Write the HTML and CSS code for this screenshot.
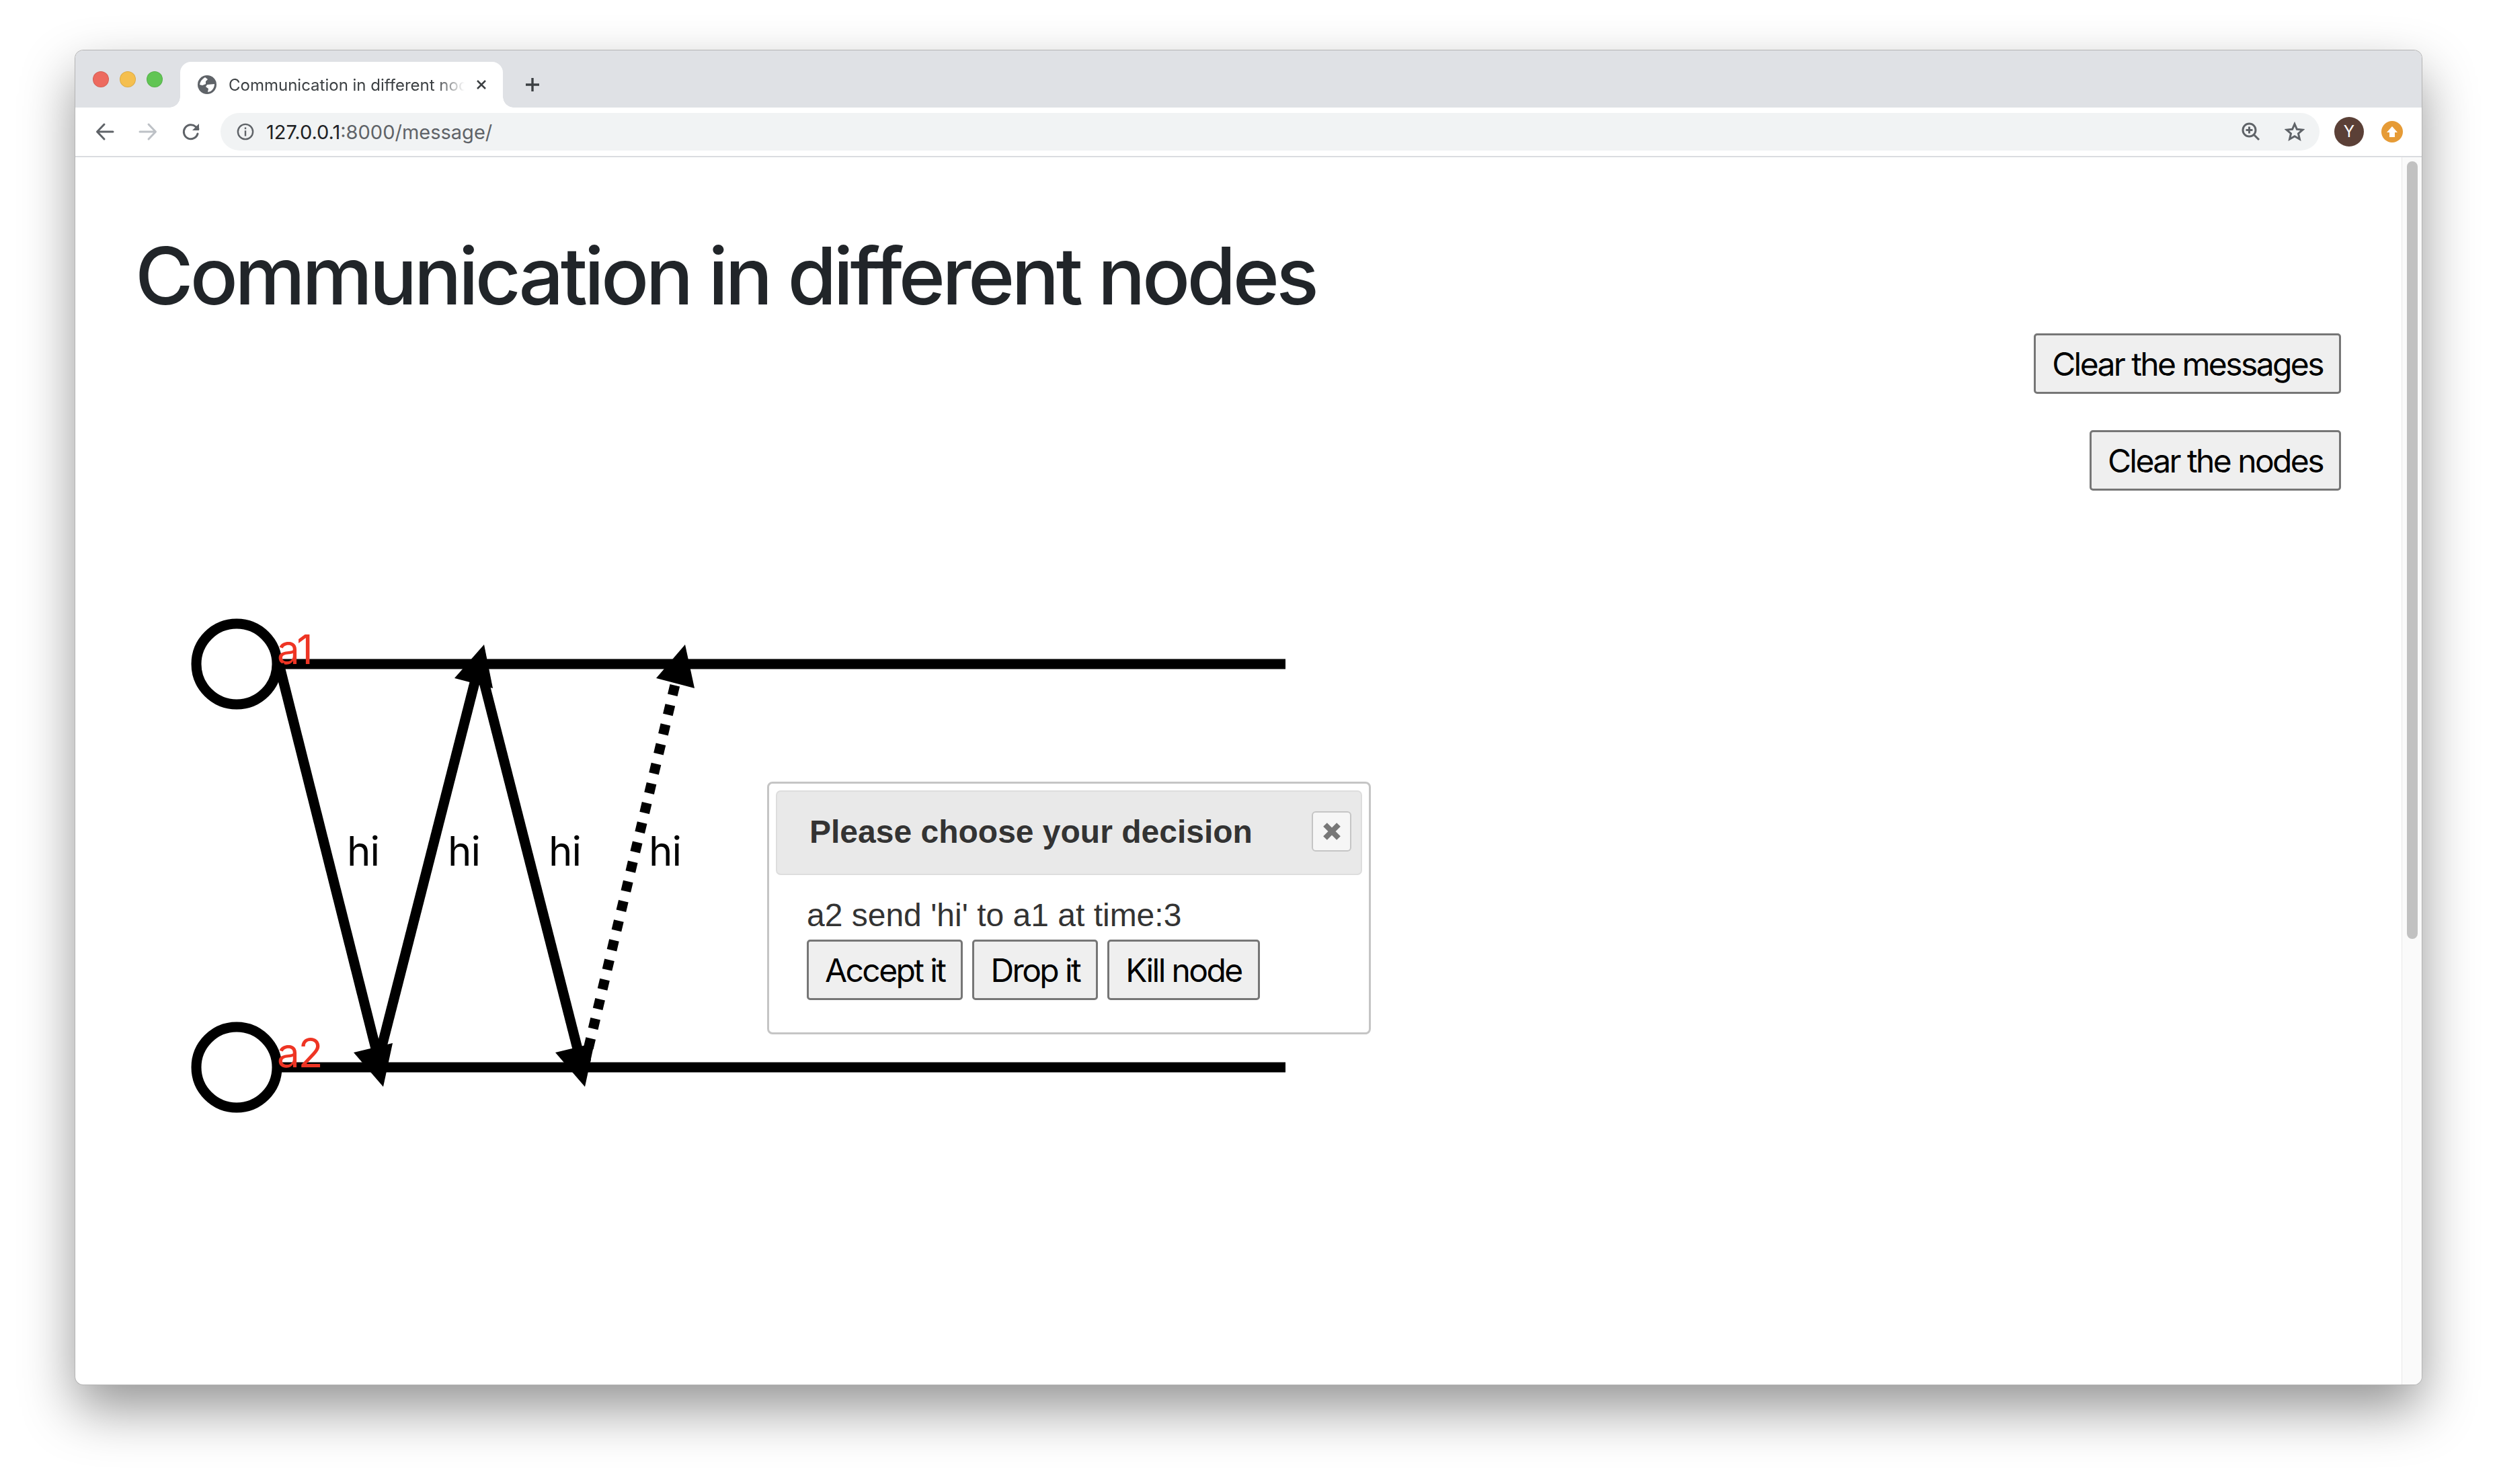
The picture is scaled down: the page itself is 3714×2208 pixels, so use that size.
FILE: index.html
```html
<!DOCTYPE html>
<html lang="en">

<head>
    <meta charset="UTF-8">
    <title>Communication in different nodes</title>
    <link rel="stylesheet" href="styles.css">
</head>

<body>
    <div class="window">
        <div class="tabstrip">
            <div class="lights">
                <span class="light light-red"></span>
                <span class="light light-yellow"></span>
                <span class="light light-green"></span>
            </div>
            <div class="tab">
                <svg class="favicon" viewBox="0 0 28 28">
                    <circle cx="14" cy="14" r="14" fill="#5f6368" />
                    <path d="M3 14 Q4 7 11 3 L15 6 L12 9 L12 13 L7 15 Z" fill="#fff" />
                    <path d="M14 14 L25 13 Q25 20 19 24 L15 25 L16 20 L12 17 Z" fill="#fff" />
                </svg>
                <span class="tab-title">Communication in different nodes</span>
                <svg class="tab-close" viewBox="0 0 16 16">
                    <path d="M2 2 L14 14 M14 2 L2 14" />
                </svg>
            </div>
            <svg class="new-tab" viewBox="0 0 24 24">
                <path d="M12 2 V22 M2 12 H22" />
            </svg>
        </div>

        <div class="toolbar">
            <svg class="nav-icon" viewBox="0 0 28 28">
                <path d="M26 14 H3 M13 3 L2.5 14 L13 25" />
            </svg>
            <svg class="nav-icon nav-disabled" viewBox="0 0 28 28">
                <path d="M2 14 H25 M15 3 L25.5 14 L15 25" />
            </svg>
            <svg class="nav-icon" viewBox="0 0 28 28">
                <path d="M24 17 A10.5 10.5 0 1 1 21 6.5 L25 10" />
                <path class="solid" d="M26 2 V12 H16 Z" />
            </svg>
            <div class="omnibox">
                <svg class="info-icon" viewBox="0 0 28 28">
                    <circle cx="14" cy="14" r="12" />
                    <path d="M14 12 V21 M14 7 V10" />
                </svg>
                <span class="url"><span class="url-host">127.0.0.1</span>:8000/message/</span>
                <svg class="omni-icon zoom-icon" viewBox="0 0 28 28">
                    <circle cx="11.5" cy="11.5" r="9.5" />
                    <path d="M11.5 6.5 V16.5 M6.5 11.5 H16.5 M18.5 18.5 L26 26" />
                </svg>
                <svg class="omni-icon star-icon" viewBox="0 0 30 30">
                    <path d="M15 3.5 L18.4 11.3 L26.9 12.1 L20.5 17.7 L22.4 26 L15 21.7 L7.6 26 L9.5 17.7 L3.1 12.1 L11.6 11.3 Z" />
                </svg>
            </div>
            <div class="avatar">Y</div>
            <svg class="extension" viewBox="0 0 32 32">
                <circle cx="16" cy="16" r="16" fill="#e69b36" />
                <path d="M16 8 L24 17 H20 V24 H12 V17 H8 Z" fill="#fff" />
            </svg>
        </div>

        <div class="viewport">
            <main class="page">
                <h1>Communication in different nodes</h1>

                <div class="actions">
                    <button class="btn">Clear the messages</button>
                    <button class="btn">Clear the nodes</button>
                </div>

                <svg class="diagram" viewBox="0 0 1100 800">
                    <!-- timelines -->
                    <circle class="node" cx="240" cy="108" r="60" />
                    <circle class="node" cx="240" cy="708" r="60" />
                    <line class="timeline" x1="307" y1="108" x2="1800" y2="108" />
                    <line class="timeline" x1="307" y1="708" x2="1800" y2="708" />
                    <text class="node-label" x="300" y="108">a1</text>
                    <text class="node-label" x="300" y="708">a2</text>

                    <!-- messages -->
                    <line class="message" x1="303" y1="108" x2="452" y2="700" />
                    <polygon class="head" points="458,737 414,686 472,672" />
                    <text class="message-label" x="404" y="408">hi</text>

                    <line class="message" x1="448" y1="708" x2="598" y2="120" />
                    <polygon class="head" points="608,79 564,129 621,144" />
                    <text class="message-label" x="554" y="408">hi</text>

                    <line class="message" x1="601" y1="108" x2="752" y2="700" />
                    <polygon class="head" points="758,737 714,686 772,672" />
                    <text class="message-label" x="704" y="408">hi</text>

                    <line class="message message-dropped" x1="891.8" y1="139.7" x2="756" y2="710" />
                    <polygon class="head" points="907,79 864,129 921,144" />
                    <text class="message-label" x="853" y="408">hi</text>
                </svg>

                <div class="dialog">
                    <div class="dialog-title">
                        <span>Please choose your decision</span>
                        <button class="dialog-close" title="Close">
                            <svg viewBox="0 0 28 28">
                                <path d="M4 4 L24 24 M24 4 L4 24" />
                            </svg>
                        </button>
                    </div>
                    <div class="dialog-body">
                        <div>a2 send 'hi' to a1 at time:3</div>
                        <div class="dialog-buttons">
                            <button class="btn">Accept it</button>
                            <button class="btn">Drop it</button>
                            <button class="btn">Kill node</button>
                        </div>
                    </div>
                </div>
            </main>
            <div class="scrollbar">
                <div class="scrollbar-thumb"></div>
            </div>
        </div>
    </div>
</body>

</html>
```

FILE: styles.css
```css
html,
body {
    height: 100%;
}

body {
    margin: 0;
    padding: 75px 112px 148px;
    box-sizing: border-box;
    background-color: #fff;
    font-family: Inter, "Liberation Sans", sans-serif;
    overflow: hidden;
}

.window {
    display: flex;
    flex-direction: column;
    height: 1985px;
    border-radius: 12px;
    overflow: hidden;
    background-color: #fff;
    box-shadow: 0 0 0 1px #b4b4b4, 0 36px 80px rgba(0, 0, 0, 0.42);
}

/* tab strip */
.tabstrip {
    display: flex;
    align-items: flex-end;
    flex: none;
    height: 85px;
    padding-left: 26px;
    background-color: #dfe1e5;
}

.lights {
    display: flex;
    gap: 16px;
    align-self: flex-start;
    margin-top: 31px;
    width: 130px;
}

.light {
    width: 24px;
    height: 24px;
    border-radius: 50%;
    box-sizing: border-box;
    border: 1px solid rgba(0, 0, 0, 0.1);
}

.light-red {
    background-color: #ed6a5f;
}

.light-yellow {
    background-color: #f5bf4f;
}

.light-green {
    background-color: #61c554;
}

.tab {
    position: relative;
    display: flex;
    align-items: center;
    width: 480px;
    height: 68px;
    box-sizing: border-box;
    padding: 0 24px 0 26px;
    border-radius: 16px 16px 0 0;
    background-color: #fff;
}

.tab::before,
.tab::after {
    content: "";
    position: absolute;
    bottom: 0;
    width: 16px;
    height: 16px;
}

.tab::before {
    left: -16px;
    background: radial-gradient(circle at 0 0, #dfe1e5 15.5px, #fff 16px);
}

.tab::after {
    right: -16px;
    background: radial-gradient(circle at 100% 0, #dfe1e5 15.5px, #fff 16px);
}

.favicon {
    flex: none;
    width: 28px;
    height: 28px;
    margin-right: 18px;
}

.tab-title {
    flex: 1;
    overflow: hidden;
    white-space: nowrap;
    font-size: 24px;
    color: #3c4043;
    -webkit-mask-image: linear-gradient(to right, #000 88%, transparent 100%);
    mask-image: linear-gradient(to right, #000 88%, transparent 100%);
}

.tab-close {
    flex: none;
    width: 16px;
    height: 16px;
    margin-left: 17px;
    fill: none;
    stroke: #3c4043;
    stroke-width: 2.5;
}

.new-tab {
    flex: none;
    width: 24px;
    height: 24px;
    margin: 0 0 22px 32px;
    fill: none;
    stroke: #3c4043;
    stroke-width: 3.4;
}

/* toolbar */
.toolbar {
    display: flex;
    align-items: center;
    flex: none;
    height: 72px;
    padding-left: 30px;
    border-bottom: 2px solid #dadce0;
    background-color: #fff;
}

.nav-icon {
    flex: none;
    width: 28px;
    height: 28px;
    margin-right: 36px;
    fill: none;
    stroke: #5f6368;
    stroke-width: 3;
    stroke-linecap: round;
    stroke-linejoin: round;
}

.nav-icon .solid {
    fill: #5f6368;
    stroke: none;
}

.nav-disabled {
    stroke: #bdc1c6;
}

.omnibox {
    display: flex;
    align-items: center;
    flex: none;
    width: 3122px;
    height: 56px;
    margin-left: -6px;
    box-sizing: border-box;
    padding: 0 22px 0 24px;
    border-radius: 28px;
    background-color: #f1f3f4;
}

.info-icon {
    flex: none;
    width: 26px;
    height: 26px;
    margin-right: 18px;
    fill: none;
    stroke: #5f6368;
    stroke-width: 2.6;
}

.url {
    flex: 1;
    font-size: 29px;
    color: #5f6368;
}

.url-host {
    color: #202124;
}

.omni-icon {
    flex: none;
    fill: none;
    stroke: #5f6368;
    stroke-width: 3;
}

.zoom-icon {
    width: 28px;
    height: 28px;
    margin-right: 36px;
}

.star-icon {
    width: 30px;
    height: 30px;
}

.avatar {
    flex: none;
    width: 44px;
    height: 44px;
    margin-left: 22px;
    border-radius: 50%;
    background-color: #5b4037;
    color: #fff;
    font-size: 24px;
    line-height: 44px;
    text-align: center;
}

.extension {
    flex: none;
    width: 32px;
    height: 32px;
    margin-left: 26px;
}

/* page */
.viewport {
    display: flex;
    flex: 1;
    min-height: 0;
}

.page {
    position: relative;
    flex: 1;
    min-width: 0;
    overflow: hidden;
}

h1 {
    margin: 104px 0 0 89px;
    font-size: 118px;
    font-weight: 550;
    letter-spacing: -4.75px;
    line-height: 144px;
    color: #212529;
}

.actions {
    display: flex;
    flex-direction: column;
    align-items: flex-end;
    gap: 54px;
    margin: 14px 90px 0 0;
}

.btn {
    height: 90px;
    box-sizing: border-box;
    padding: 0 24px;
    border: 3px solid #767676;
    border-radius: 5px;
    background-color: #efefef;
    color: #000;
    font-family: Inter, "Liberation Sans", sans-serif;
    font-size: 48px;
    letter-spacing: -2.6px;
}

.diagram {
    display: block;
    width: 1100px;
    height: 800px;
    margin-top: 150px;
    overflow: visible;
}

.node {
    fill: none;
    stroke: #000;
    stroke-width: 15;
}

.timeline,
.message {
    stroke: #000;
    stroke-width: 15;
}

.message-dropped {
    stroke-dasharray: 15 15;
}

.head {
    fill: #000;
}

.node-label {
    fill: #ee3524;
    font-size: 60px;
    letter-spacing: -2px;
}

.message-label {
    fill: #000;
    font-size: 60px;
    letter-spacing: -1px;
}

/* decision dialog */
.dialog {
    position: absolute;
    left: 1029px;
    top: 929px;
    width: 898px;
    height: 376px;
    box-sizing: border-box;
    padding: 10px;
    border: 3px solid #c5c5c5;
    border-radius: 8px;
    background-color: #fff;
    font-family: "Liberation Sans", Arial, sans-serif;
    color: #333;
}

.dialog-title {
    display: flex;
    align-items: center;
    justify-content: space-between;
    height: 126px;
    box-sizing: border-box;
    padding: 0 14px 4px 48px;
    border: 2px solid #ddd;
    border-radius: 7px;
    background-color: #e9e9e9;
    font-size: 48px;
    font-weight: 700;
}

.dialog-close {
    display: flex;
    align-items: center;
    justify-content: center;
    width: 59px;
    height: 60px;
    padding: 0;
    border: 2px solid #c5c5c5;
    border-radius: 6px;
    background-color: #f6f6f6;
}

.dialog-close svg {
    width: 28px;
    height: 28px;
    fill: none;
    stroke: #777;
    stroke-width: 8;
}

.dialog-body {
    padding: 26px 0 0 46px;
    font-size: 48px;
    line-height: 68px;
}

.dialog-buttons {
    display: flex;
    gap: 14px;
    margin-top: 2px;
}

/* scrollbar */
.scrollbar {
    flex: none;
    width: 30px;
    box-sizing: border-box;
    padding: 6px 6px 0 7px;
    border-left: 1px solid #e8e8e8;
    background-color: #fafafa;
}

.scrollbar-thumb {
    height: 1157px;
    border-radius: 8px;
    background-color: #c1c1c1;
}
```
